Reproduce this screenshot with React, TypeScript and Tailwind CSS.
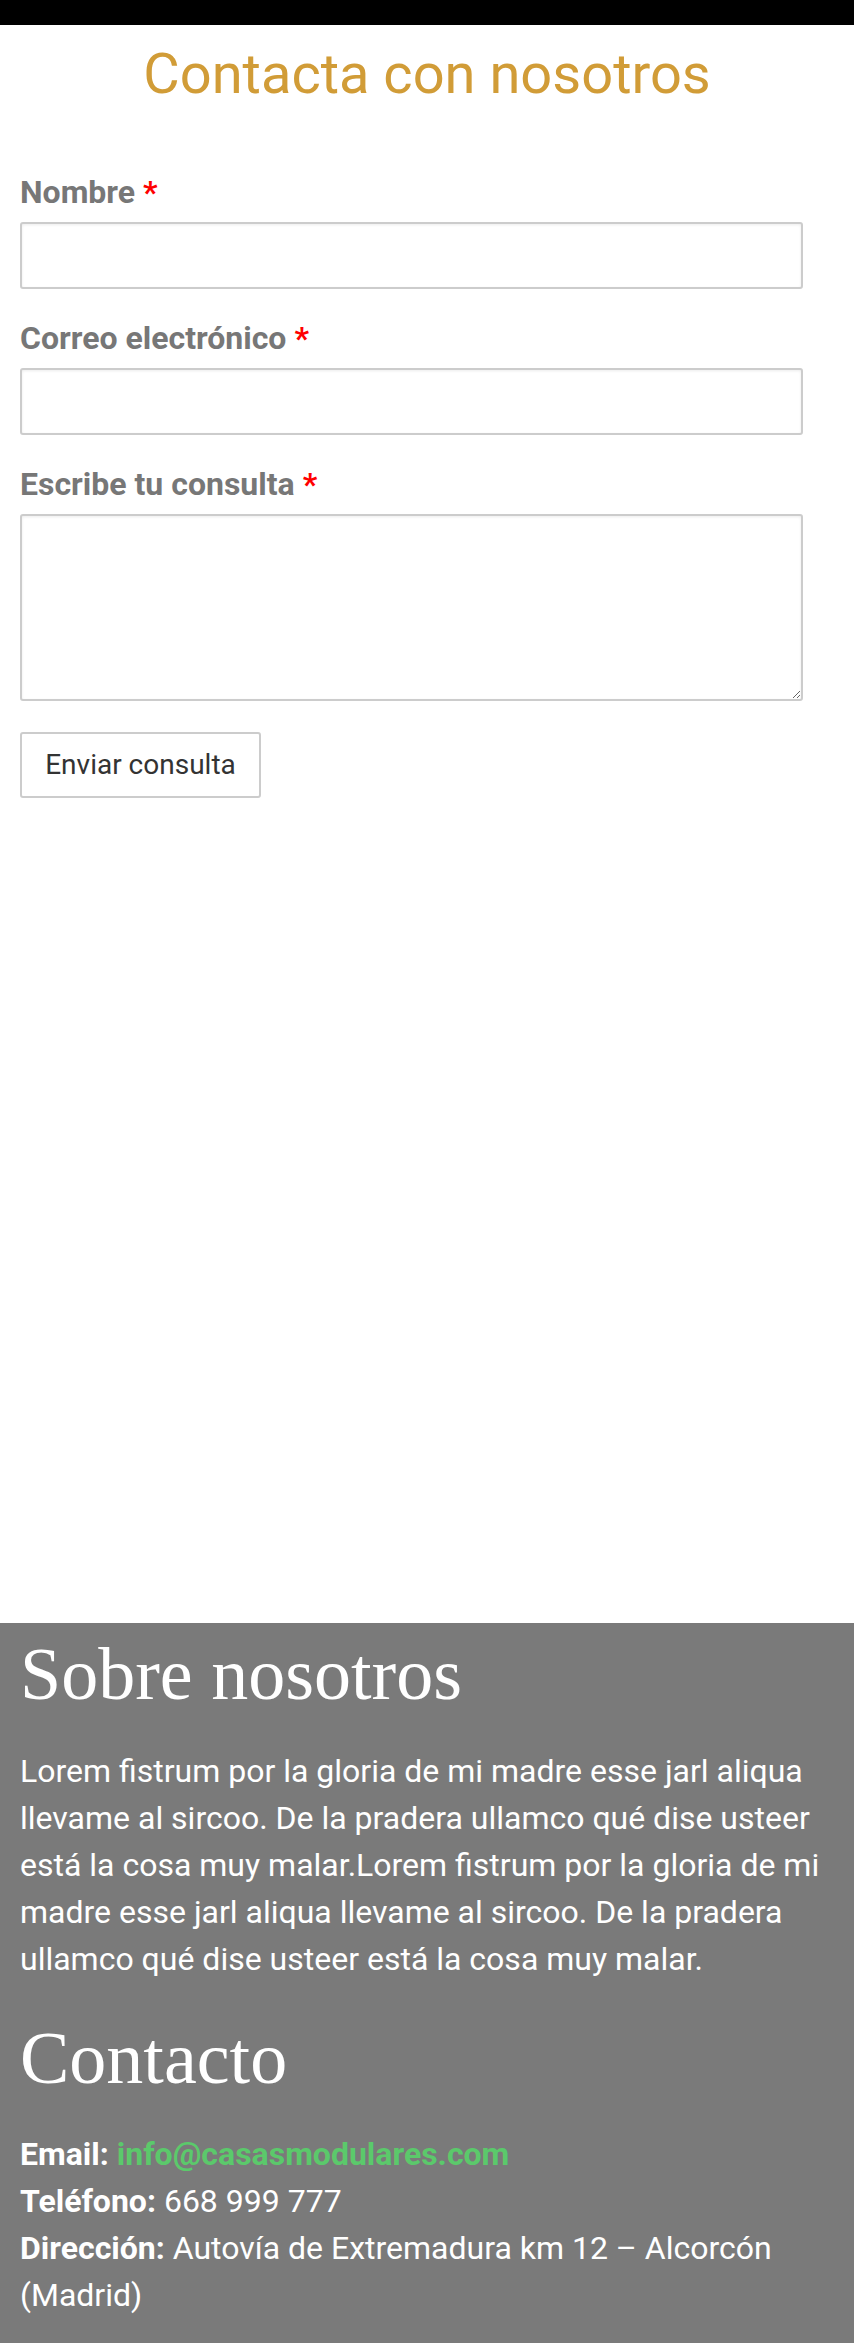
import React from "react";

type FieldProps = {
    label: string;
    multiline?: boolean;
}

function Field({ label, multiline }: FieldProps) {
    return (
        <div className="flex flex-col gap-[11px]">
            <label className="text-[32px] leading-[37px] font-bold text-[#777777]">
                {label} <span className="text-[#ff0000]">*</span>
            </label>
            {
                multiline
                    ? <textarea className="w-[783px] h-[187px] border-2 border-[#cccccc] rounded-[3px] bg-white shadow-[inset_0_1px_3px_rgba(0,0,0,0.08)] outline-none" />
                    : <input type="text" className="w-[783px] h-[67px] border-2 border-[#cccccc] rounded-[3px] bg-white shadow-[inset_0_1px_3px_rgba(0,0,0,0.08)] outline-none" />
            }
        </div>
    );
}

export default function App() {
    return (
        <div className="min-h-[2343px] flex flex-col bg-white font-['Roboto',sans-serif]">
            <div className="h-[25px] bg-black" />

            <h1 className="mt-[16px] text-center text-[56px] leading-[66px] text-[#d19c37]">
                Contacta con nosotros
            </h1>

            <form className="mt-[67px] px-5 flex flex-col gap-[31px]">
                <Field label="Nombre" />
                <Field label="Correo electrónico" />
                <Field label="Escribe tu consulta" multiline />
                <div>
                    <button type="button" className="w-[241px] h-[66px] border-2 border-[#cccccc] rounded-[3px] bg-white text-[28px] text-[#333333]">
                        Enviar consulta
                    </button>
                </div>
            </form>

            <footer className="mt-auto bg-[#7a7a7a] text-white px-5 pt-[9px] pb-[24px]">
                <h2 className="font-['Liberation_Serif',serif] text-[74px] leading-[84px]">Sobre nosotros</h2>
                <p className="mt-[32px] text-[32px] leading-[47px]">
                    Lorem fistrum por la gloria de mi madre esse jarl aliqua llevame al sircoo. De la pradera ullamco qué dise usteer está la cosa muy malar.Lorem fistrum por la gloria de mi madre esse jarl aliqua llevame al sircoo. De la pradera ullamco qué dise usteer está la cosa muy malar.
                </p>
                <h2 className="mt-[33px] font-['Liberation_Serif',serif] text-[74px] leading-[84px]">Contacto</h2>
                <div className="mt-[31px] text-[32px] leading-[47px]">
                    <p><strong>Email:</strong> <a href="#" className="font-bold text-[#5bc96b]">info@casasmodulares.com</a></p>
                    <p><strong>Teléfono:</strong> 668 999 777</p>
                    <p><strong>Dirección:</strong> Autovía de Extremadura km 12 – Alcorcón (Madrid)</p>
                </div>
            </footer>
        </div>
    );
}
